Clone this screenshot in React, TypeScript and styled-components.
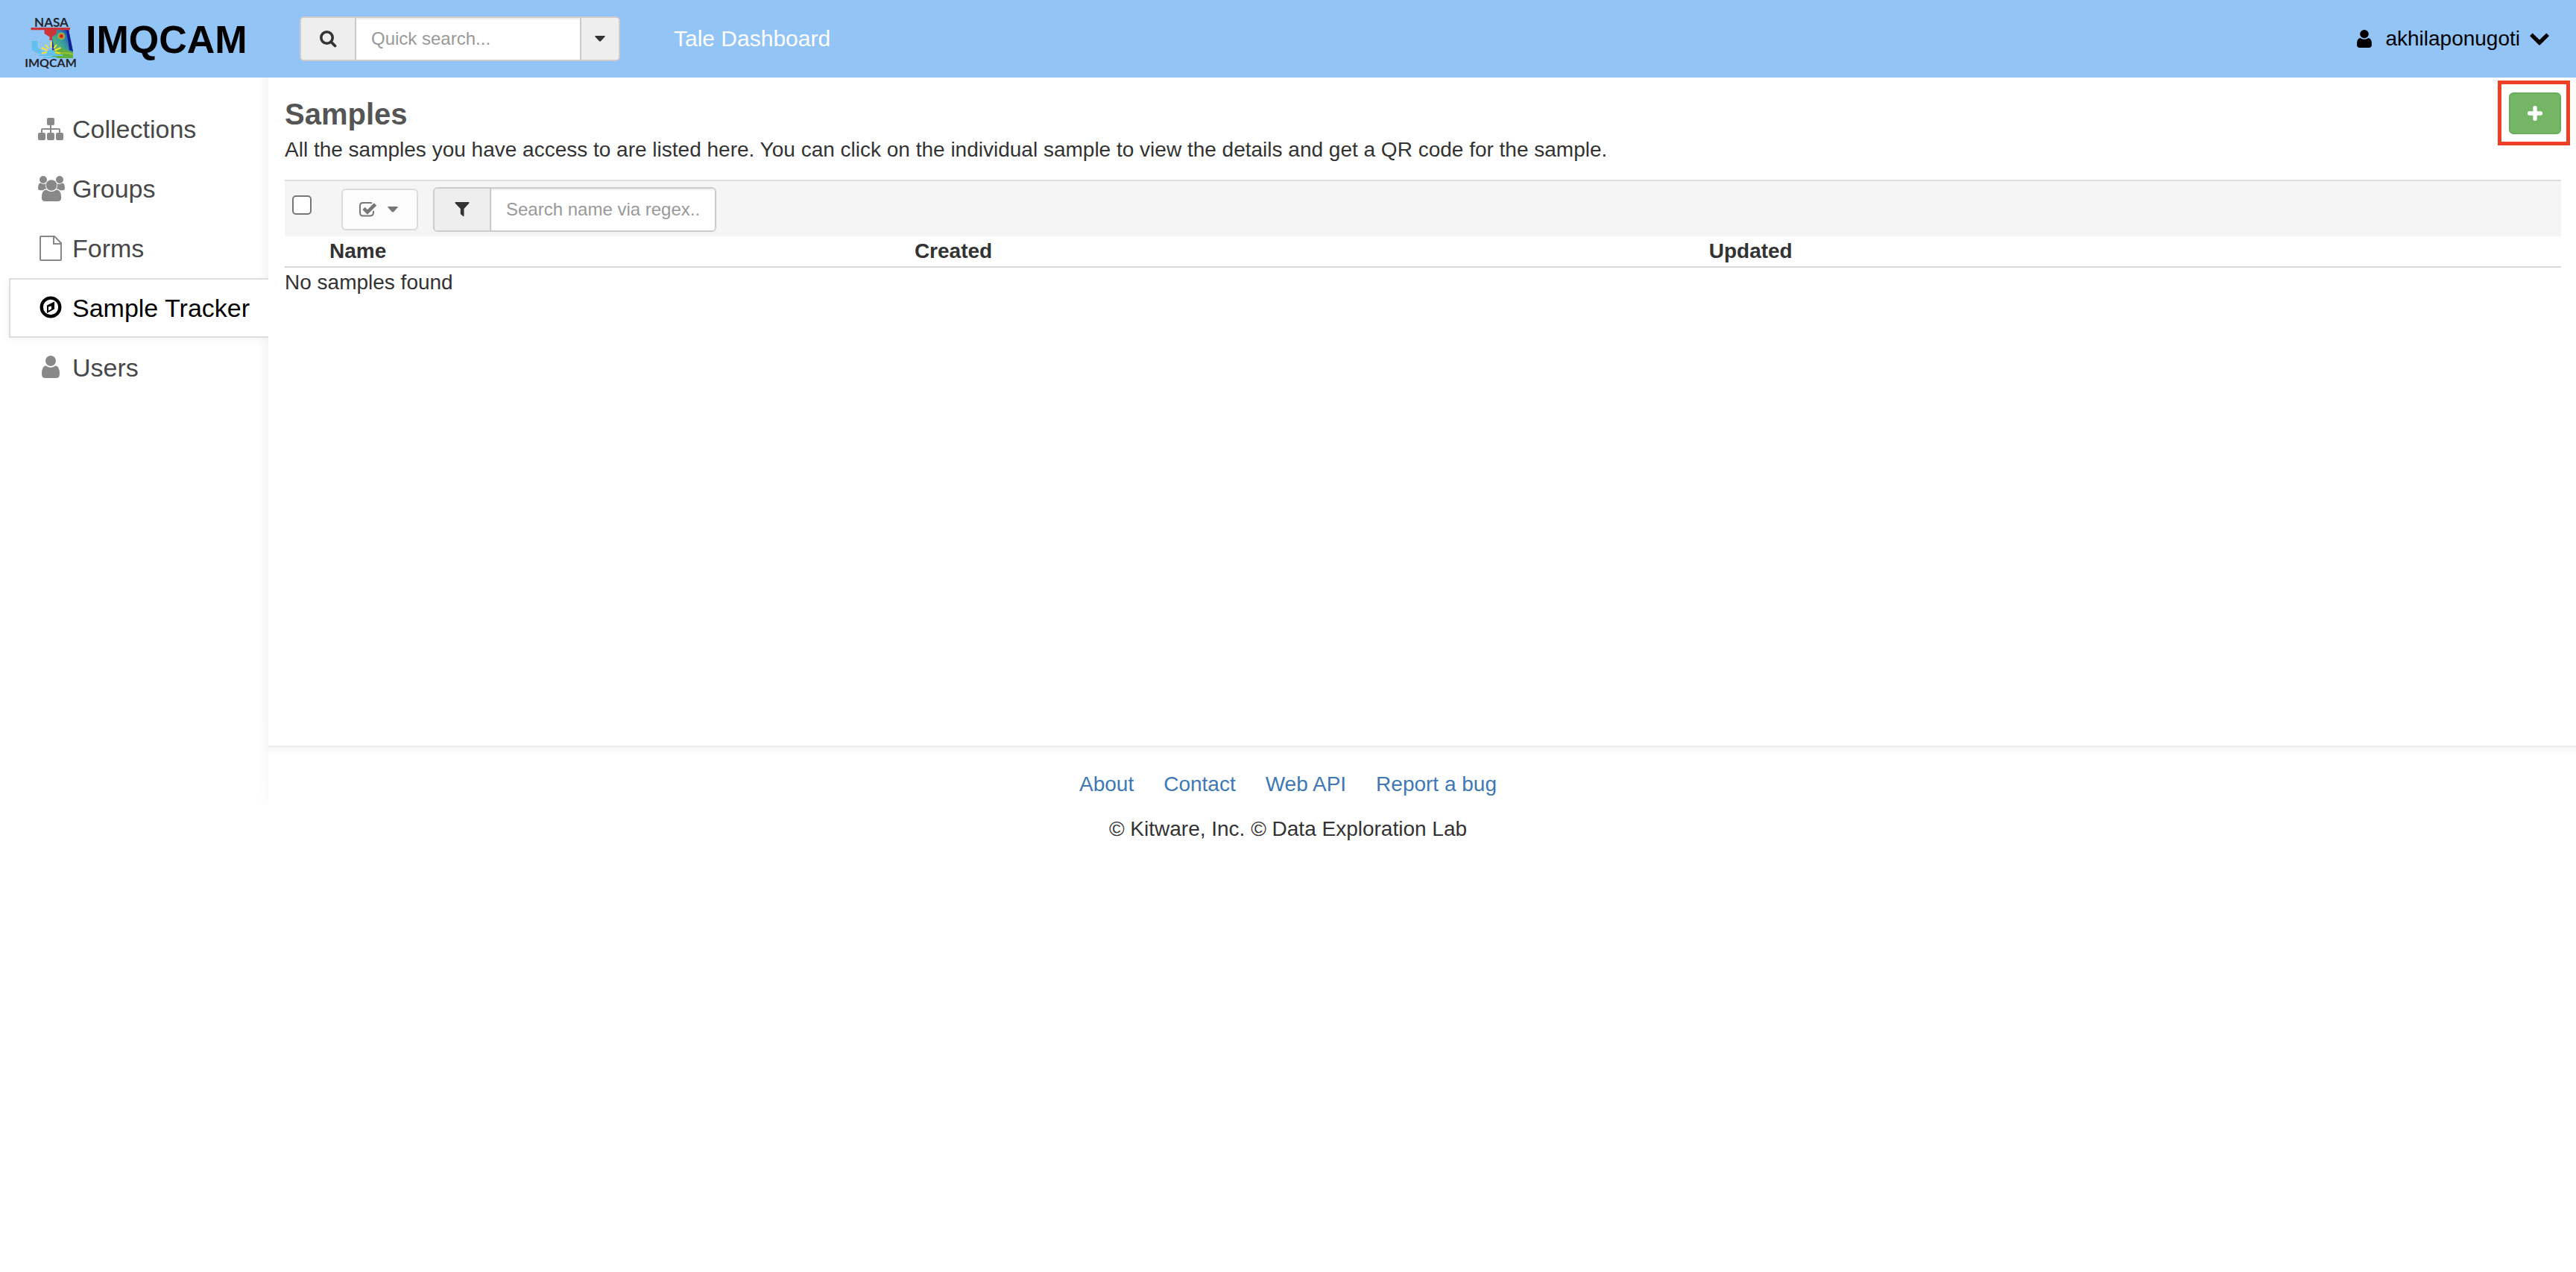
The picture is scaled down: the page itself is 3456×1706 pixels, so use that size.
import React from 'react';
import styled, { createGlobalStyle } from 'styled-components';

const GlobalStyle = createGlobalStyle`
  *, *::before, *::after { box-sizing: border-box; }
  body {
    margin: 0;
    background: #fff;
    color: #333;
    font-family: "Liberation Sans", Arial, Helvetica, sans-serif;
    font-size: 28px;
    line-height: 40px;
  }
  button, input { font-family: inherit; }
`;

const Icon = styled.svg<{ $w: number; $h: number }>`
  display: block;
  flex: none;
  width: ${(p) => p.$w}px;
  height: ${(p) => p.$h}px;
  fill: currentColor;
`;

/* ---------- header ---------- */

const Header = styled.header`
  display: flex;
  align-items: center;
  height: 104px;
  padding: 0 36px 0 34px;
  background: #92c4f6;
`;

const Brand = styled.a`
  display: flex;
  align-items: center;
  gap: 11px;
  width: 368px;
  padding-top: 2px;
  color: #000;
  font-size: 52px;
  line-height: 60px;
  font-weight: bold;
  text-decoration: none;
`;

const BrandMark = styled.svg`
  flex: none;
  overflow: visible;
  width: 70px;
  height: 80px;
  margin-top: 8px;
`;

const InputGroup = styled.form<{ $width: number }>`
  display: flex;
  width: ${(p) => p.$width}px;
  height: 60px;
  border: 2px solid #ccc;
  border-radius: 6px;
  background: #fff;
  overflow: hidden;
`;

const Addon = styled.label<{ $width: number }>`
  display: flex;
  align-items: center;
  justify-content: center;
  width: ${(p) => p.$width}px;
  flex: none;
  border-right: 2px solid #ccc;
  background: #eee;
  color: #333;
`;

const TextInput = styled.input`
  flex: 1;
  min-width: 0;
  border: 0;
  padding: 0 18px 0 20px;
  font-size: 24px;
  line-height: 36px;
  color: #555;
  background: #fff;
  box-shadow: inset 0 2px 2px rgba(0, 0, 0, 0.075);
  outline: 0;
  &::placeholder { color: #999; opacity: 1; }
`;

const GroupButton = styled.button`
  display: flex;
  align-items: center;
  justify-content: center;
  width: 52px;
  flex: none;
  padding: 0;
  border: 0;
  border-left: 2px solid #ccc;
  background: #eee;
  color: #333;
`;

const HeaderLink = styled.a`
  margin-left: 72px;
  color: #fff;
  font-size: 30px;
  text-decoration: none;
`;

const UserMenu = styled.button`
  display: flex;
  align-items: center;
  margin-left: auto;
  padding: 0;
  border: 0;
  background: none;
  color: #000;
  font-size: 28px;
  line-height: 40px;
`;

const UserName = styled.span`
  margin: 0 13px 0 18px;
`;

/* ---------- page body ---------- */

const Body = styled.div`
  display: flex;
  align-items: flex-start;
`;

const Sidebar = styled.nav`
  flex: none;
  width: 360px;
  min-height: 976px;
  padding: 29px 0 0 12px;
  background:
    linear-gradient(to bottom, rgba(255, 255, 255, 0) 850px, rgba(255, 255, 255, 0.7) 976px),
    linear-gradient(to left, #f6f6f6, #fff 14px);
`;

const NavList = styled.ul`
  margin: 0;
  padding: 0;
  list-style: none;
`;

const NavLink = styled.a<{ $active?: boolean }>`
  display: flex;
  align-items: center;
  gap: 11px;
  height: 80px;
  padding-left: 36px;
  border: 2px solid ${(p) => (p.$active ? '#ddd' : 'transparent')};
  border-right: 0;
  background: ${(p) => (p.$active ? '#fff' : 'transparent')};
  box-shadow: ${(p) => (p.$active ? '-2px 4px 10px rgba(0, 0, 0, 0.04)' : 'none')};
  clip-path: inset(-12px 0 -16px -12px);
  color: ${(p) => (p.$active ? '#000' : '#484848')};
  font-size: 34px;
  text-decoration: none;
  svg { color: ${(p) => (p.$active ? '#000' : '#888')}; }
`;

const Column = styled.div`
  flex: 1;
  min-width: 0;
`;

const Main = styled.main`
  min-height: 896px;
  padding: 20px 20px 0 22px;
`;

const TitleRow = styled.div`
  display: flex;
  align-items: flex-start;
  justify-content: space-between;
  margin-bottom: 20px;
`;

const TitleBlock = styled.div`
  padding-top: 7px;
`;

const Title = styled.h1`
  margin: 0 0 6px;
  color: #555;
  font-size: 40px;
  line-height: 44px;
`;

const Lead = styled.p`
  margin: 0;
`;

const CreateButton = styled.button`
  position: relative;
  display: flex;
  align-items: center;
  justify-content: center;
  width: 70px;
  height: 56px;
  padding: 0;
  border: 2px solid #67ad5a;
  border-radius: 6px;
  background: #74b566;
  color: #fff;
  &::after {
    content: '';
    position: absolute;
    inset: -18px -14px -17px -17px;
    border: 5px solid #ee4027;
  }
`;

const Toolbar = styled.div`
  display: flex;
  align-items: center;
  padding: 8px 10px 6px;
  border-top: 2px solid #ddd;
  background: #f5f5f5;
`;

const CheckAll = styled.input`
  appearance: none;
  width: 26px;
  height: 26px;
  margin: 0 40px 12px 0;
  border: 2px solid #767676;
  border-radius: 5px;
  background: #fff;
`;

const ActionsButton = styled.button`
  display: flex;
  align-items: center;
  justify-content: center;
  gap: 14px;
  width: 103px;
  height: 56px;
  margin-right: 20px;
  padding: 0 4px 0 0;
  border: 2px solid #dbdbdb;
  border-radius: 6px;
  background: #fcfcfc;
  color: #777;
`;

const SampleTable = styled.table`
  width: 100%;
  table-layout: fixed;
  border-collapse: separate;
  border-spacing: 0;
  th, td { padding: 0; text-align: left; }
  th { border-bottom: 2px solid #d8d8d8; }
`;

const HeadCell = styled.th<{ $width?: string }>`
  width: ${(p) => p.$width || 'auto'};
`;

const Footer = styled.footer`
  padding: 30px 360px 30px 0;
  border-top: 2px solid #ececec;
  background: linear-gradient(to bottom, #f7f7f7, #fff 12px);
  text-align: center;
`;

const FooterLinks = styled.div`
  display: flex;
  justify-content: center;
  gap: 40px;
  margin-bottom: 20px;
`;

const FooterLink = styled.a`
  color: #4078b5;
  text-decoration: none;
`;

/* ---------- drawings ---------- */

const Logo = () => (
  <BrandMark viewBox="0 -6 70 80" aria-hidden="true">
    <defs>
      <linearGradient id="field" x1="0" y1="1" x2="1" y2="0">
        <stop offset="0" stopColor="#7ec850" />
        <stop offset="0.45" stopColor="#3fa793" />
        <stop offset="0.7" stopColor="#2f78b4" />
        <stop offset="0.86" stopColor="#1733a0" />
      </linearGradient>
    </defs>
    <path d="M36 17H58L64 46V55H36Z" fill="url(#field)" />
    <path d="M55 17h3l6 29-5-2Z" fill="#101f94" />
    <path d="M36 29l3 14-3 2Z" fill="#1c2fa6" />
    <path d="M36 49Q45 40 52 43T64 47V55H36Z" fill="#62ad3c" />
    <path d="M38 51q12-6 26-1" stroke="#a4c93b" strokeWidth="1.5" fill="none" />
    <circle cx="48.300" cy="25.500" r="5" fill="#7fc64f" />
    <circle cx="48.300" cy="25.500" r="3.500" fill="#e5642a" />
    <circle cx="48.300" cy="25.500" r="2" fill="#b81f1f" />
    <path d="M8.500 32H16.500V41L24 46H32V49H17L8.500 44Z" fill="#62c0ee" />
    <path d="M18 51H50M24 54H42" stroke="#62c0ee" strokeWidth="2" />
    <path d="M28 48Q34 40 41 48V51H28Z" fill="#62c0ee" />
    <path
      d="M34.500 33V41M27 37l4 5M42 37l-4 5M21.500 41l8 3.500M47.500 41l-8 3.500M22 48.500l7-1.500M47 48.500l-7-1.500"
      stroke="#f9e52d"
      strokeWidth="2"
    />
    <path d="M7.500 14H60V17.300H42V22L36 26.500V31H32.500V26.500L25.500 22V17.300H7.500Z" fill="#cb3439" />
    <text x="35" y="13" textAnchor="middle" fontFamily="Lato, sans-serif" fontSize="17" fontWeight="700" fill="#23252b">
      NASA
    </text>
    <text x="34" y="67" textAnchor="middle" fontFamily="Lato, sans-serif" fontSize="16" fontWeight="700" fill="#23252b">
      IMQCAM
    </text>
  </BrandMark>
);

const SearchIcon = () => (
  <Icon $w={24} $h={24} viewBox="0 0 24 24">
    <circle cx="10.500" cy="10.500" r="7.700" fill="none" stroke="currentColor" strokeWidth="3.600" />
    <path d="M16 16l5.500 5.500" stroke="currentColor" strokeWidth="3.800" strokeLinecap="round" />
  </Icon>
);

const CaretIcon = () => (
  <Icon $w={14} $h={8} viewBox="0 0 14 8">
    <path d="M1 0H13Q14.500 0 13.500 1.200L8 7.200Q7 8 6 7.200L.5 1.200Q-.5 0 1 0Z" />
  </Icon>
);

const personShape =
  'M12 0a7 7 0 1 1 0 14a7 7 0 1 1 0-14ZM5.600 13.600Q12 18.200 18.400 13.600Q24 14 24 24.500Q24 30 19.500 30H4.500Q0 30 0 24.500Q0 14 5.600 13.600Z';

const UserIcon = () => (
  <Icon $w={20} $h={24} viewBox="0 0 24 30" preserveAspectRatio="none">
    <path d={personShape} />
  </Icon>
);

const ChevronIcon = () => (
  <Icon $w={26} $h={17} viewBox="0 0 26 17">
    <path d="M3.700.4L13 9.500L22.300.4L25.600 3.700V4.500L13.500 16.500H12.500L.4 4.500V3.700Z" />
  </Icon>
);

const CollectionsIcon = () => (
  <Icon $w={36} $h={36} viewBox="0 0 36 36">
    <rect x="13" y="3" width="10" height="10" rx="2" />
    <rect x="1" y="23" width="10" height="10" rx="2" />
    <rect x="13" y="23" width="10" height="10" rx="2" />
    <rect x="25" y="23" width="10" height="10" rx="2" />
    <path d="M6 24V19Q6 18 7 18H29Q30 18 30 19V24M18 12V24" fill="none" stroke="currentColor" strokeWidth="2" />
  </Icon>
);

const GroupsIcon = () => (
  <Icon $w={36} $h={36} viewBox="0 0 36 36" overflow="visible">
    <circle cx="8" cy="6" r="5" />
    <circle cx="30" cy="6" r="5" />
    <circle cx="19" cy="13.500" r="7.300" />
    <path d="M4.500 10.500Q8 13 11.400 11.200Q10 15.500 12.600 18.300Q9.500 18.300 7.500 20.200H4Q1 20.200 1 17.500Q1 10.500 4.500 10.500Z" />
    <path d="M33.500 10.500Q30 13 26.600 11.200Q28 15.500 25.400 18.300Q28.500 18.300 30.500 20.200H34Q37 20.200 37 17.500Q37 10.500 33.500 10.500Z" />
    <path d="M12.400 19.500Q19 24.500 25.600 19.500Q32.200 19.500 32.200 30Q32.200 35 27.500 35H10.500Q5.800 35 5.800 30Q5.800 19.500 12.400 19.500Z" />
  </Icon>
);

const FormsIcon = () => (
  <Icon $w={36} $h={36} viewBox="0 0 36 36">
    <path
      d="M5 2H23L32 11V33Q32 34 31 34H5Q4 34 4 33V3Q4 2 5 2ZM22 2V12H32"
      fill="none"
      stroke="currentColor"
      strokeWidth="2"
    />
  </Icon>
);

const CompassIcon = () => (
  <Icon $w={36} $h={36} viewBox="0 0 36 36">
    <circle cx="18" cy="17" r="12.300" fill="none" stroke="currentColor" strokeWidth="4.300" />
    <path d="M23 9.500V19.500L13 25V14.500ZM15 16.500V21.800L19 19.300V15.500Z" fillRule="evenodd" />
  </Icon>
);

const UsersIcon = () => (
  <Icon $w={36} $h={36} viewBox="-6 -2 36 36">
    <path d={personShape} />
  </Icon>
);

const PlusIcon = () => (
  <Icon $w={20} $h={20} viewBox="0 0 20 20">
    <path d="M10 2.500V17.500M2.500 10H17.500" stroke="currentColor" strokeWidth="5.400" strokeLinecap="round" />
  </Icon>
);

const CheckIcon = () => (
  <Icon $w={24} $h={20} viewBox="0 0 24 20">
    <path
      d="M17 1.500Q16 1 15 1H5Q1 1 1 5V14Q1 18.500 5 18.500H14Q19 18.500 19 14V12"
      fill="none"
      stroke="currentColor"
      strokeWidth="2"
    />
    <path d="M6 8.500L11 13.500L21.500 3" fill="none" stroke="currentColor" strokeWidth="4.600" />
  </Icon>
);

const FilterIcon = () => (
  <Icon $w={20} $h={20} viewBox="0 0 20 20">
    <path d="M1 0H19Q20 .8 19.200 1.800L12.500 9V18.500Q12.300 19.600 11.300 19L7.800 16V9L.8 1.800Q0 .8 1 0Z" />
  </Icon>
);

const navItems = [
  { label: 'Collections', icon: <CollectionsIcon /> },
  { label: 'Groups', icon: <GroupsIcon /> },
  { label: 'Forms', icon: <FormsIcon /> },
  { label: 'Sample Tracker', icon: <CompassIcon />, active: true },
  { label: 'Users', icon: <UsersIcon /> },
];

const footerItems = ['About', 'Contact', 'Web API', 'Report a bug'];

export default function App() {
  return (
    <>
      <GlobalStyle />
      <Header>
        <Brand href="#">
          <Logo />
          IMQCAM
        </Brand>
        <InputGroup $width={430}>
          <Addon $width={74} htmlFor="quick-search" aria-label="Quick search">
            <SearchIcon />
          </Addon>
          <TextInput id="quick-search" type="text" placeholder="Quick search..." />
          <GroupButton type="button" aria-label="Search mode">
            <CaretIcon />
          </GroupButton>
        </InputGroup>
        <HeaderLink href="#tale">Tale Dashboard</HeaderLink>
        <UserMenu type="button">
          <UserIcon />
          <UserName>akhilaponugoti</UserName>
          <ChevronIcon />
        </UserMenu>
      </Header>
      <Body>
        <Sidebar>
          <NavList>
            {navItems.map((item) => (
              <li key={item.label}>
                <NavLink href="#" $active={item.active}>
                  {item.icon}
                  {item.label}
                </NavLink>
              </li>
            ))}
          </NavList>
        </Sidebar>
        <Column>
          <Main>
            <TitleRow>
              <TitleBlock>
                <Title>Samples</Title>
                <Lead>
                  All the samples you have access to are listed here. You can click on the individual sample to view the
                  details and get a QR code for the sample.
                </Lead>
              </TitleBlock>
              <CreateButton type="button" aria-label="Create sample">
                <PlusIcon />
              </CreateButton>
            </TitleRow>
            <Toolbar>
              <CheckAll type="checkbox" aria-label="Select all samples" />
              <ActionsButton type="button" aria-label="Checked actions">
                <CheckIcon />
                <CaretIcon />
              </ActionsButton>
              <InputGroup $width={380}>
                <Addon $width={76} htmlFor="name-filter" aria-label="Filter by name">
                  <FilterIcon />
                </Addon>
                <TextInput id="name-filter" type="text" placeholder="Search name via regex..." />
              </InputGroup>
            </Toolbar>
            <SampleTable>
              <thead>
                <tr>
                  <HeadCell $width="60px" />
                  <HeadCell $width="25.7%">Name</HeadCell>
                  <HeadCell $width="34.9%">Created</HeadCell>
                  <HeadCell>Updated</HeadCell>
                </tr>
              </thead>
              <tbody>
                <tr>
                  <td colSpan={4}>No samples found</td>
                </tr>
              </tbody>
            </SampleTable>
          </Main>
          <Footer>
            <FooterLinks>
              {footerItems.map((label) => (
                <FooterLink key={label} href="#">
                  {label}
                </FooterLink>
              ))}
            </FooterLinks>
            © Kitware, Inc. © Data Exploration Lab
          </Footer>
        </Column>
      </Body>
    </>
  );
}
